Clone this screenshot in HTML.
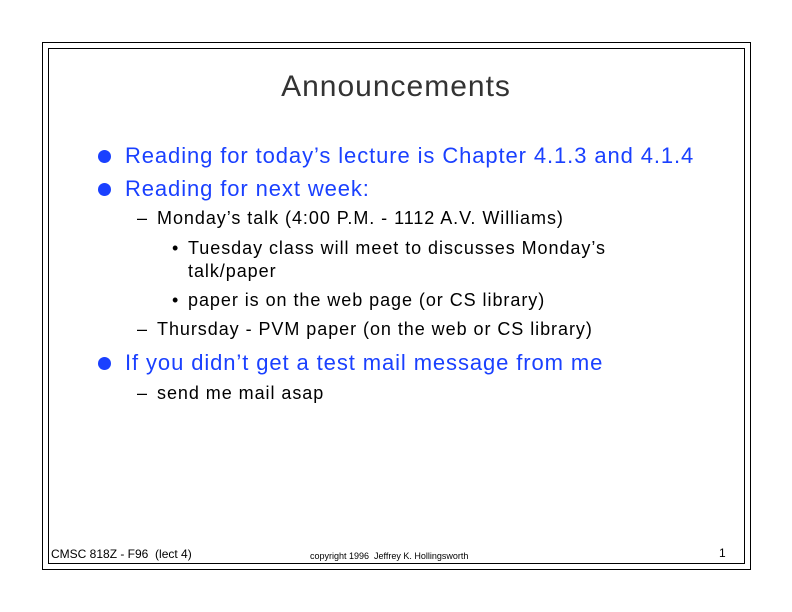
<!DOCTYPE html>
<html><head><style>
body{margin:0;width:792px;height:612px;background:#fff;position:relative;font-family:"Liberation Sans",sans-serif;overflow:hidden}
.b{position:absolute;border:1px solid #000}
.t{position:absolute;white-space:nowrap;line-height:1}
.blue{color:#1a40ff;font-size:22px;letter-spacing:0.9px}
.blk{color:#000;font-size:18px;letter-spacing:0.95px}
.dot{position:absolute;width:13px;height:13px;border-radius:50%;background:#1a40ff}
</style></head><body>
<div class="b" style="left:42px;top:42px;width:707px;height:526px"></div>
<div class="b" style="left:48px;top:48px;width:695px;height:514px"></div>
<div class="t" style="left:0;width:792px;text-align:center;top:72px;font-size:30px;color:#333;letter-spacing:1px">Announcements</div>

<div class="dot" style="left:98px;top:150px"></div>
<div class="t blue" style="left:125px;top:145px">Reading for today’s lecture is Chapter 4.1.3 and 4.1.4</div>
<div class="dot" style="left:98px;top:183px"></div>
<div class="t blue" style="left:125px;top:178px">Reading for next week:</div>
<div class="t blk" style="left:137px;top:209px">–</div><div class="t blk" style="left:157px;top:209px">Monday’s talk (4:00 P.M. - 1112 A.V. Williams)</div>
<div class="t blk" style="left:172px;top:239px">•</div><div class="t blk" style="left:188px;top:239px">Tuesday class will meet to discusses Monday’s</div>
<div class="t blk" style="left:188px;top:262px">talk/paper</div>
<div class="t blk" style="left:172px;top:291px">•</div><div class="t blk" style="left:188px;top:291px">paper is on the web page (or CS library)</div>
<div class="t blk" style="left:137px;top:320px">–</div><div class="t blk" style="left:157px;top:320px">Thursday - PVM paper (on the web or CS library)</div>
<div class="dot" style="left:98px;top:357px"></div>
<div class="t blue" style="left:125px;top:352px">If you didn’t get a test mail message from me</div>
<div class="t blk" style="left:137px;top:384px">–</div><div class="t blk" style="left:157px;top:384px">send me mail asap</div>

<div class="t" style="left:51px;top:548px;font-size:12px">CMSC 818Z - F96&nbsp; (lect 4)</div>
<div class="t" style="left:310px;top:552px;font-size:9px">copyright 1996&nbsp; Jeffrey K. Hollingsworth</div>
<div class="t" style="left:719px;top:547px;font-size:12px">1</div>
</body></html>
